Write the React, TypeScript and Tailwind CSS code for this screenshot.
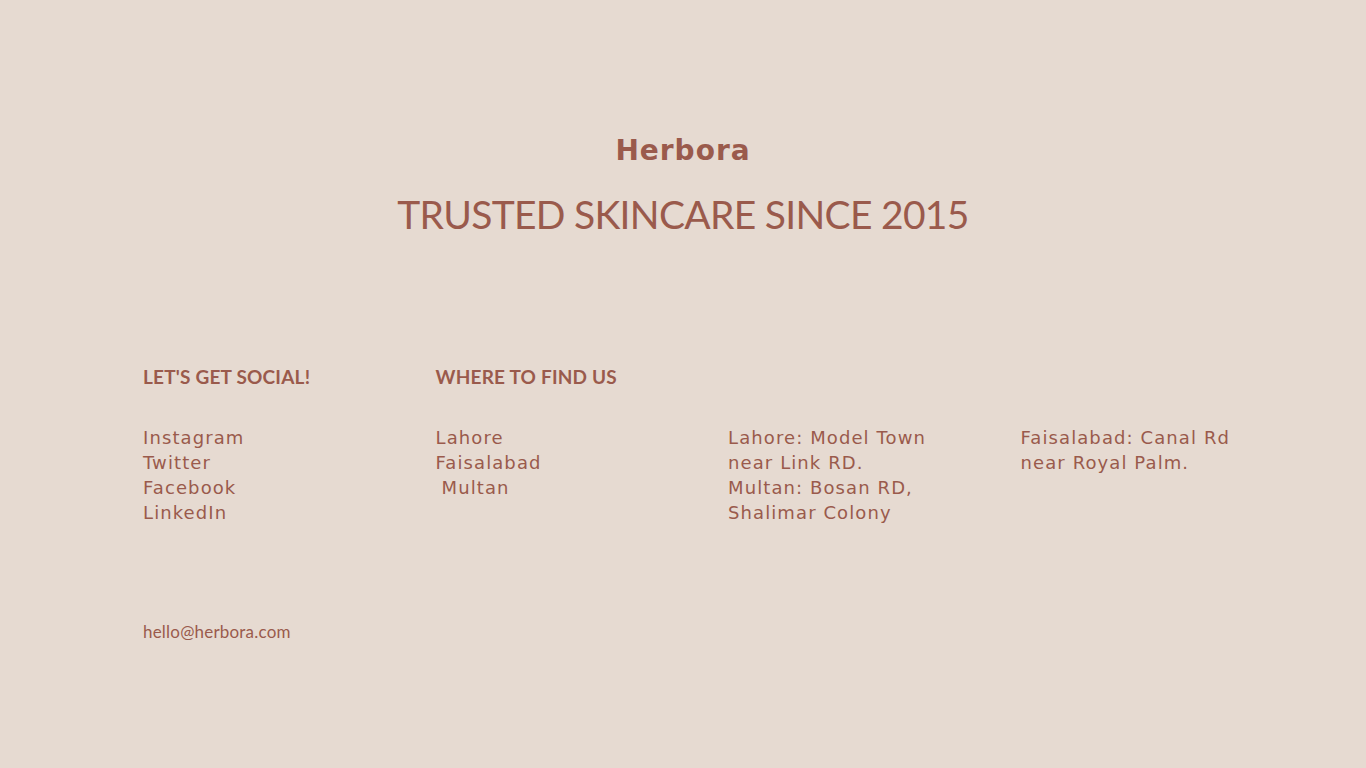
const socials = ["Instagram", "Twitter", "Facebook", "LinkedIn"];

const App = () => {
    return (
        <div className="min-h-screen w-full bg-[#e6dad1] text-[#9a5a4c]">
            <div className="flex flex-col items-center pt-[133px]">
                <h1 className="font-['DejaVu_Sans',sans-serif] text-[28px] font-bold leading-[36px] tracking-[1px]">Herbora</h1>
                <h2 className="mt-[20px] font-['Lato',sans-serif] text-[39px] leading-[50px] tracking-[-0.7px]">TRUSTED SKINCARE SINCE 2015</h2>
            </div>

            <div className="pl-[143px] pt-[126px]">
                <div className="grid w-[1170px] grid-cols-4">
                    <div>
                        <h3 className="font-['Lato',sans-serif] text-[19px] font-bold leading-[24px] tracking-[0.2px]">LET'S GET SOCIAL!</h3>
                        <ul className="mt-[36px] font-['DejaVu_Sans',sans-serif] text-[18px] leading-[25px] tracking-[1.1px]">
                            {socials.map((s) => (
                                <li key={s}>{s}</li>
                            ))}
                        </ul>
                    </div>
                    <div>
                        <h3 className="font-['Lato',sans-serif] text-[19px] font-bold leading-[24px] tracking-[0.2px]">WHERE TO FIND US</h3>
                        <ul className="mt-[36px] font-['DejaVu_Sans',sans-serif] text-[18px] leading-[25px] tracking-[1.1px]">
                            <li>Lahore</li>
                            <li>Faisalabad</li>
                            <li className="pl-[6px]">Multan</li>
                        </ul>
                    </div>
                    <div className="pt-[60px] font-['DejaVu_Sans',sans-serif] text-[18px] leading-[25px] tracking-[1.1px]">
                        <p>Lahore: Model Town<br />near Link RD.</p>
                        <p>Multan: Bosan RD,<br />Shalimar Colony</p>
                    </div>
                    <div className="pt-[60px] font-['DejaVu_Sans',sans-serif] text-[18px] leading-[25px] tracking-[1.1px]">
                        <p>Faisalabad: Canal Rd<br />near Royal Palm.</p>
                    </div>
                </div>

                <p className="mt-[95px] font-['Lato',sans-serif] text-[17px] leading-[24px] tracking-[0.2px]">hello@herbora.com</p>
            </div>
        </div>
    );
};

export default App;
